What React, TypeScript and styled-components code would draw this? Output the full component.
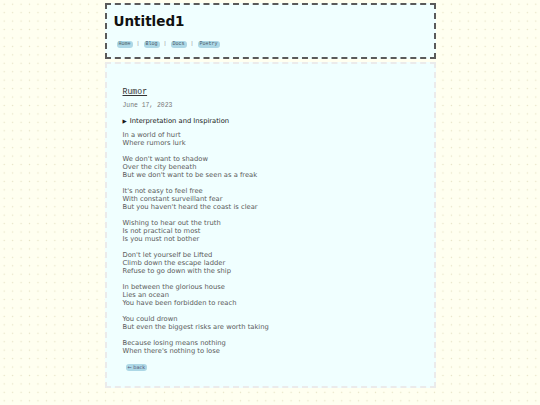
import React from "react";
import styled, { createGlobalStyle } from "styled-components";

const Global = createGlobalStyle`
  html, body { margin: 0; padding: 0; }
  html {
    background-color: #fffff0;
    background-image: radial-gradient(circle, #e6e2c4 0.6px, transparent 1px);
    background-size: 8.44px 8.44px;
    background-position: 0 0;
  }
  body {
    margin: 3.4px;
    font-family: "DejaVu Sans", "Noto Sans", sans-serif;
    font-size: 6.75px;
    color: #222;
  }
`;

const Page = styled.div`
  width: 331px;
  margin: 0 auto;
  display: flex;
  flex-direction: column;
  gap: 3.4px;
`;

const Header = styled.header`
  box-sizing: border-box;
  background: #f0ffff;
  border: 2px dashed #5a5a5a;
  padding: 8px 7px 9px 7px;
  display: flex;
  flex-direction: column;
`;

const Title = styled.h1`
  margin: 0 0 11.3px 0;
  font-family: "DejaVu Sans", sans-serif;
  font-weight: bold;
  font-size: 13.5px;
  line-height: 16px;
  color: #111;
`;

const Nav = styled.nav`
  display: flex;
  align-items: center;
  margin-left: 3px;
  height: 7px;
`;

const Pill = styled.a<{ $sans?: boolean }>`
  display: inline-block;
  background: #add8e6;
  border-radius: 3px;
  padding: 0 2px;
  height: 7px;
  line-height: 7px;
  font-family: ${(p) => (p.$sans ? '"DejaVu Sans", sans-serif' : '"Liberation Mono", "Courier New", monospace')};
  font-size: 5px;
  color: #4a5a66;
  text-decoration: none;
`;

const Sep = styled.span`
  font-family: "Liberation Mono", monospace;
  font-size: 5px;
  line-height: 7px;
  color: #888;
  margin: 0 4px;
`;

const Main = styled.main`
  box-sizing: border-box;
  background: #f0ffff;
  border: 2px dashed #ebebeb;
  padding: 22.5px 16px 15.5px 16px;
  display: flex;
  flex-direction: column;
  align-items: flex-start;
`;

const PostTitle = styled.a`
  font-family: "Liberation Mono", "Courier New", monospace;
  font-size: 8.2px;
  line-height: 10px;
  color: #333;
  text-decoration: underline;
  text-underline-offset: 1px;
  margin: 0 0 5px 0;
`;

const DateLine = styled.div`
  font-family: "Liberation Mono", "Courier New", monospace;
  font-size: 6.4px;
  line-height: 8px;
  color: #777;
  margin: 0 0 7px 0;
`;

const Details = styled.details`
  margin: 0 0 6px 0;
  summary {
    list-style: none;
    font-size: 6.75px;
    line-height: 8px;
    color: #1a1a1a;
    cursor: pointer;
  }
  summary::-webkit-details-marker { display: none; }
  summary::before {
    content: "▶";
    font-size: 5.5px;
    margin-right: 3px;
  }
`;

const Stanza = styled.p`
  margin: 0 0 8px 0;
  font-size: 6.75px;
  line-height: 8px;
  color: #5a5a5a;
`;

const Back = styled(Pill)`
  margin: 1px 0 0 3px;
  color: #557;
`;

const stanzas = [
  ["In a world of hurt", "Where rumors lurk"],
  ["We don't want to shadow", "Over the city beneath", "But we don't want to be seen as a freak"],
  ["It's not easy to feel free", "With constant surveillant fear", "But you haven't heard the coast is clear"],
  ["Wishing to hear out the truth", "Is not practical to most", "Is you must not bother"],
  ["Don't let yourself be Lifted", "Climb down the escape ladder", "Refuse to go down with the ship"],
  ["In between the glorious house", "Lies an ocean", "You have been forbidden to reach"],
  ["You could drown", "But even the biggest risks are worth taking"],
  ["Because losing means nothing", "When there's nothing to lose"],
];

const links = ["Home", "Blog", "Docs", "Poetry"];

export default function App() {
  return (
    <>
      <Global />
      <Page>
        <Header>
          <Title>Untitled1</Title>
          <Nav>
            {links.map((l, i) => (
              <React.Fragment key={l}>
                {i > 0 && <Sep>|</Sep>}
                <Pill href="#">{l}</Pill>
              </React.Fragment>
            ))}
          </Nav>
        </Header>
        <Main>
          <PostTitle href="#">Rumor</PostTitle>
          <DateLine>June 17, 2023</DateLine>
          <Details>
            <summary>Interpretation and Inspiration</summary>
          </Details>
          {stanzas.map((s, i) => (
            <Stanza key={i}>
              {s.map((line, j) => (
                <React.Fragment key={j}>
                  {line}
                  {j < s.length - 1 && <br />}
                </React.Fragment>
              ))}
            </Stanza>
          ))}
          <Back href="#" $sans>
            ← back
          </Back>
        </Main>
      </Page>
    </>
  );
}
